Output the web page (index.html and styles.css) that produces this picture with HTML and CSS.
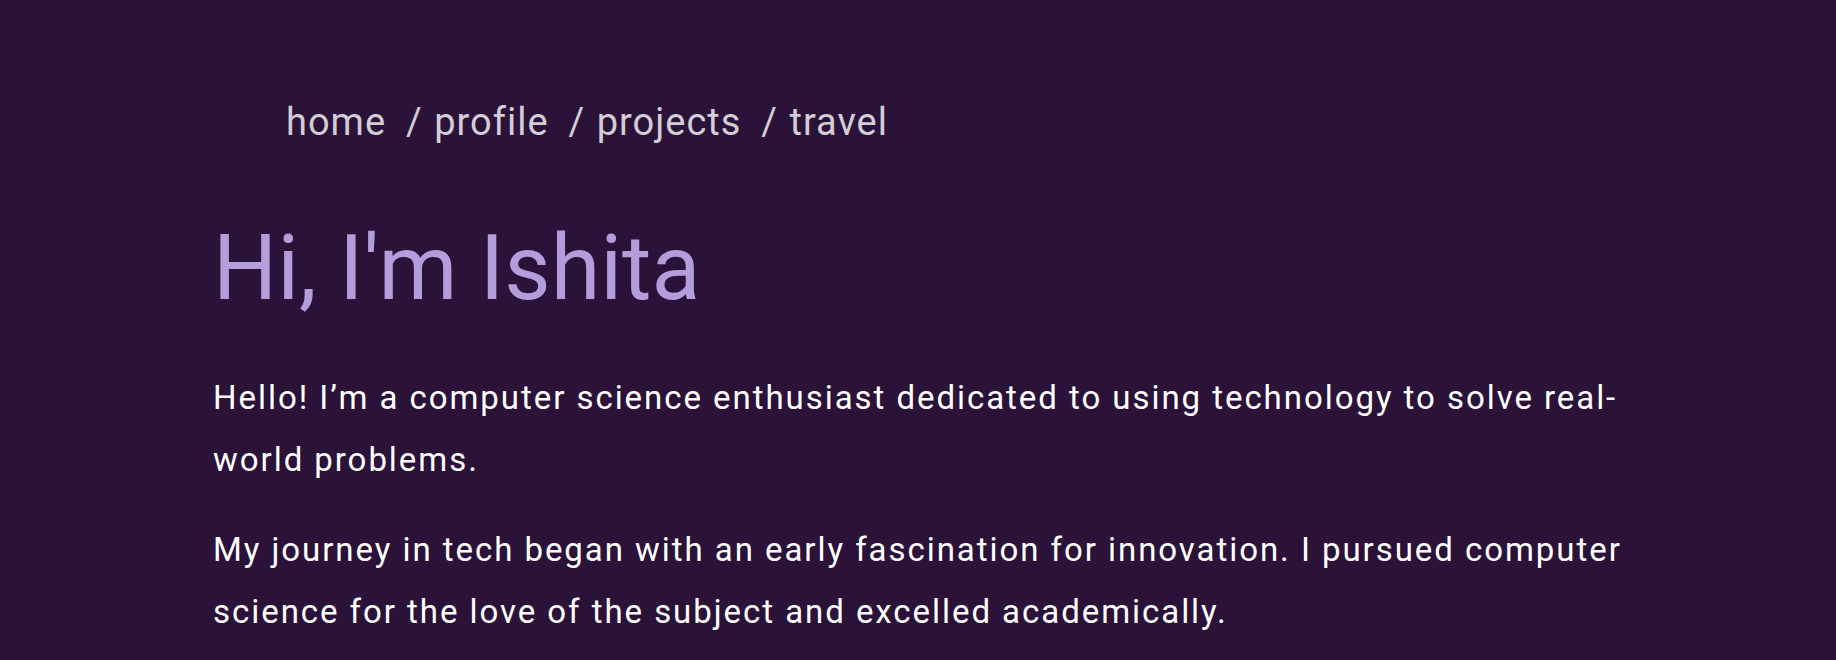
FILE: index.html
```html
<!DOCTYPE html>
<html lang="en">
<head>
<meta charset="utf-8">
<title>Ishita</title>
<link rel="stylesheet" href="styles.css">
</head>
<body>
<div class="page">
  <nav class="crumbs"><a href="#">home</a><span class="sep">/ </span><a href="#">profile</a><span class="sep">/ </span><a href="#">projects</a><span class="sep">/ </span><a href="#">travel</a></nav>
  <main class="content">
    <h1 class="title">Hi, I'm Ishita</h1>
    <p class="text">Hello! I’m a computer science enthusiast dedicated to using technology to solve real-world problems.</p>
    <p class="text">My journey in tech began with an early fascination for innovation. I pursued computer science for the love of the subject and excelled academically.</p>
  </main>
</div>
</body>
</html>
```
FILE: styles.css
```css
html, body {
  margin: 0;
  padding: 0;
  background: #2b1239;
}
body {
  font-family: Roboto, "Liberation Sans", sans-serif;
  color: #ffffff;
}
.page {
  padding: 0 196px 0 213px;
}
.crumbs {
  padding: 96px 0 0 73px;
  font-size: 38px;
  letter-spacing: 1px;
  color: #d3cdd6;
  line-height: 52px;
  white-space: pre;
}
.crumbs a {
  color: #d3cdd6;
  text-decoration: none;
}
.sep {
  margin-left: 20px;
  padding-right: 1px;
}
.content {
  margin-top: 61px;
  display: flex;
  flex-direction: column;
}
.title {
  margin: 0 0 10px;
  font-size: 90px;
  font-weight: 400;
  color: #b39ddb;
  line-height: 120px;
}
.text {
  margin: 28px 0 0;
  font-size: 33px;
  line-height: 62px;
  letter-spacing: 1.95px;
}
```
